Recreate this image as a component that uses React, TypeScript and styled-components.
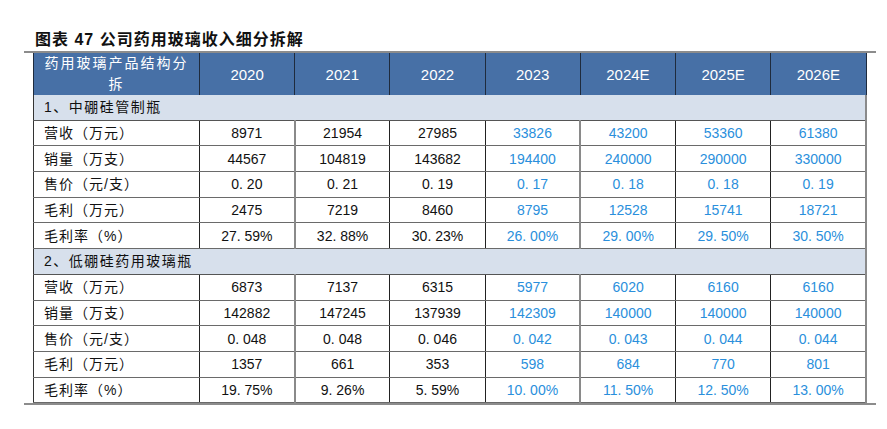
import React from "react";
import styled, { createGlobalStyle } from "styled-components";

const GlobalStyle = createGlobalStyle`
  body {
    margin: 0;
    background: #ffffff;
    font-family: "Liberation Sans", "Noto Sans CJK SC", sans-serif;
  }
`;

const Page = styled.div`
  width: 887px;
  height: 429px;
  padding-left: 24px;
  box-sizing: border-box;
`;

const Title = styled.div`
  height: 23px;
  padding-top: 28px;
  padding-left: 11px;
  font-family: "Liberation Sans", "Noto Sans CJK SC", sans-serif;
  font-weight: 700;
  font-size: 16px;
  line-height: 23px;
  letter-spacing: 1px;
  color: #111;
`;

const Frame = styled.div`
  width: 852px;
  border-top: 2px solid #8c8c8c;
  border-bottom: 2px solid #8c8c8c;
  padding-left: 9px;
  box-sizing: border-box;
`;

const Table = styled.table`
  width: 834px;
  border-collapse: collapse;
  table-layout: fixed;
  font-size: 14px;
  line-height: 18px;
`;

const HeadCell = styled.th<{ $first?: boolean }>`
  height: 42px;
  padding: 0 ${(p) => (p.$first ? "8px" : "0")};
  background: #4770a6;
  color: #ffffff;
  font-weight: 400;
  font-size: ${(p) => (p.$first ? "14px" : "15px")};
  line-height: 21px;
  letter-spacing: ${(p) => (p.$first ? "2px" : "0")};
  font-family: "Liberation Sans", "Noto Sans CJK SC", sans-serif;
  border-left: 1px solid #1f2b3d;
  border-right: 1px solid #1f2b3d;
  text-align: center;
`;

const SectionCell = styled.td`
  height: 24.7px;
  padding: 0 0 0 10px;
  background: #d7e0ec;
  color: #111;
  letter-spacing: 1.5px;
  border-left: 1px solid #333;
  border-right: 2px solid #8a8a8a;
  border-bottom: 1px solid #555;
  font-family: "Liberation Sans", "Noto Sans CJK SC", sans-serif;
`;

const LabelCell = styled.td`
  height: 24.7px;
  padding: 0 0 0 10px;
  color: #111;
  letter-spacing: 1px;
  border-left: 1px solid #333;
  border-right: 1px solid #222;
  border-bottom: 1px solid #6a6a6a;
  font-family: "Liberation Sans", "Noto Sans CJK SC", sans-serif;
  white-space: nowrap;
`;

const ValueCell = styled.td<{ $forecast?: boolean; $edge: "dark" | "gray" }>`
  height: 24.7px;
  padding: 0;
  text-align: center;
  color: ${(p) => (p.$forecast ? "#2a8fdc" : "#111")};
  border-right: ${(p) => (p.$edge === "gray" ? "2px solid #8a8a8a" : "1px solid #222")};
  border-bottom: 1px solid #6a6a6a;
  font-family: "Liberation Sans", "Noto Sans CJK SC", sans-serif;
`;

const years = ["2020", "2021", "2022", "2023", "2024E", "2025E", "2026E"];
const edges: ("dark" | "gray")[] = ["gray", "dark", "dark", "gray", "dark", "dark", "gray"];

type Row = { label: string; values: string[] };
type Section = { title: string; rows: Row[] };

const sections: Section[] = [
  {
    title: "1、中硼硅管制瓶",
    rows: [
      { label: "营收（万元）", values: ["8971", "21954", "27985", "33826", "43200", "53360", "61380"] },
      { label: "销量（万支）", values: ["44567", "104819", "143682", "194400", "240000", "290000", "330000"] },
      { label: "售价（元/支）", values: ["0. 20", "0. 21", "0. 19", "0. 17", "0. 18", "0. 18", "0. 19"] },
      { label: "毛利（万元）", values: ["2475", "7219", "8460", "8795", "12528", "15741", "18721"] },
      { label: "毛利率（%）", values: ["27. 59%", "32. 88%", "30. 23%", "26. 00%", "29. 00%", "29. 50%", "30. 50%"] },
    ],
  },
  {
    title: "2、低硼硅药用玻璃瓶",
    rows: [
      { label: "营收（万元）", values: ["6873", "7137", "6315", "5977", "6020", "6160", "6160"] },
      { label: "销量（万支）", values: ["142882", "147245", "137939", "142309", "140000", "140000", "140000"] },
      { label: "售价（元/支）", values: ["0. 048", "0. 048", "0. 046", "0. 042", "0. 043", "0. 044", "0. 044"] },
      { label: "毛利（万元）", values: ["1357", "661", "353", "598", "684", "770", "801"] },
      { label: "毛利率（%）", values: ["19. 75%", "9. 26%", "5. 59%", "10. 00%", "11. 50%", "12. 50%", "13. 00%"] },
    ],
  },
];

export default function App() {
  return (
    <Page>
      <GlobalStyle />
      <Title>图表 47 公司药用玻璃收入细分拆解</Title>
      <Frame>
        <Table>
          <colgroup>
            <col style={{ width: 166 }} />
            {years.map((y) => (
              <col key={y} />
            ))}
          </colgroup>
          <thead>
            <tr>
              <HeadCell $first>药用玻璃产品结构分拆</HeadCell>
              {years.map((y) => (
                <HeadCell key={y}>{y}</HeadCell>
              ))}
            </tr>
          </thead>
          <tbody>
            {sections.map((s) => (
              <React.Fragment key={s.title}>
                <tr>
                  <SectionCell colSpan={8}>{s.title}</SectionCell>
                </tr>
                {s.rows.map((r) => (
                  <tr key={s.title + r.label}>
                    <LabelCell>{r.label}</LabelCell>
                    {r.values.map((v, i) => (
                      <ValueCell key={i} $forecast={i >= 3} $edge={edges[i]}>
                        {v}
                      </ValueCell>
                    ))}
                  </tr>
                ))}
              </React.Fragment>
            ))}
          </tbody>
        </Table>
      </Frame>
    </Page>
  );
}
